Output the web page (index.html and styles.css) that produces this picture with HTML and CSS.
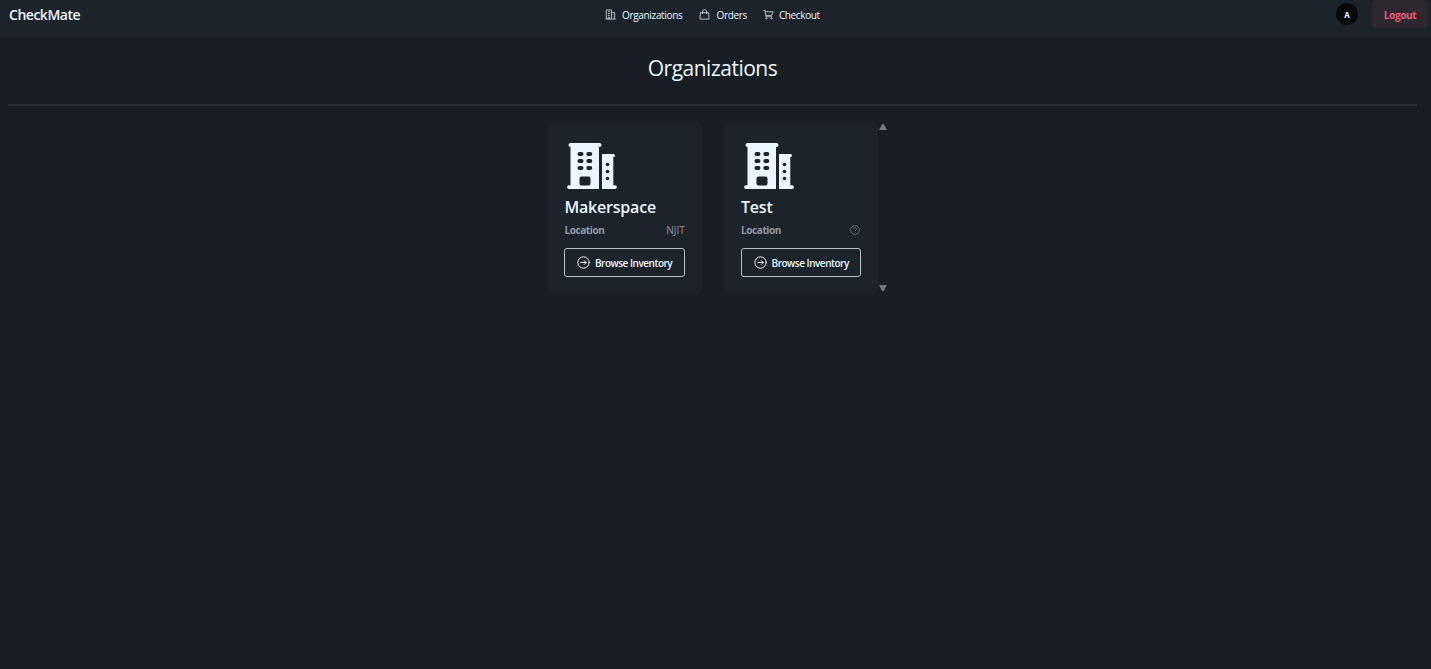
FILE: index.html
```html
<!DOCTYPE html>
<html lang="en">
<head>
    <meta charset="UTF-8">
    <meta name="viewport" content="width=device-width, initial-scale=1.0">
    <title>CheckMate</title>
    <link rel="stylesheet" href="styles.css">
</head>
<body>
    <svg class="sprite">
        <symbol id="building" viewBox="0 0 50 48">
            <path fill="currentColor" fill-rule="evenodd" d="M3.5 1h29a1.5 1.5 0 0 1 0 4H32v42H2a1.9 1.9 0 0 1 0-3.800h1.500V5a2 2 0 0 1 0-4zM12.500 10h2a1.800 1.800 0 0 1 0 4h-2a1.800 1.800 0 0 1 0-4zm8.800 0h2a1.800 1.800 0 0 1 0 4h-2a1.800 1.800 0 0 1 0-4zM12.500 17h2a1.800 1.800 0 0 1 0 4h-2a1.800 1.800 0 0 1 0-4zm8.800 0h2a1.800 1.800 0 0 1 0 4h-2a1.800 1.800 0 0 1 0-4zM12.500 24h2a1.800 1.800 0 0 1 0 4h-2a1.800 1.800 0 0 1 0-4zm8.800 0h2a1.800 1.800 0 0 1 0 4h-2a1.800 1.800 0 0 1 0-4zM14.500 34.500h7a2 2 0 0 1 2 2v5a2 2 0 0 1-2 2h-7a2 2 0 0 1-2-2v-5a2 2 0 0 1 2-2z"/>
            <path fill="currentColor" d="M35 12h11.500a1.500 1.500 0 0 1 0 3H46.300v28.200H48a1.900 1.900 0 0 1 0 3.800H35z"/>
            <g fill="#1d232a"><circle cx="40.500" cy="22.500" r="1.800"/><circle cx="40.500" cy="29.500" r="1.800"/><circle cx="40.500" cy="36.500" r="1.800"/></g>
        </symbol>
        <symbol id="arrow" viewBox="0 0 24 24">
            <g fill="none" stroke="currentColor" stroke-width="1.800" stroke-linecap="round" stroke-linejoin="round">
                <circle cx="12" cy="12" r="10.500"/><path d="M7 12h10M13.500 8.500L17 12l-3.500 3.500"/>
            </g>
        </symbol>
    </svg>

    <nav class="navbar">
        <a class="brand">CheckMate</a>
        <div class="links">
            <a class="link">
                <svg class="icon" viewBox="0 0 24 24"><path d="M1 22h22M3 22V2h11v20M14 8h7v14M6.500 6h4M6.500 10h4M6.500 14h4M7 22v-4h3v4M17.500 12v1M17.500 17v1"/></svg>
                Organizations
            </a>
            <a class="link">
                <svg class="icon" viewBox="0 0 24 24"><path d="M3 8h18l1 14H2zM7.500 11V6a4.500 4.500 0 0 1 9 0v5"/></svg>
                Orders
            </a>
            <a class="link">
                <svg class="icon" viewBox="0 0 24 24"><path d="M1 3h3.500l2 14H20M5 6h17l-3 8H6"/><circle cx="7.500" cy="20.500" r="1.500"/><circle cx="18.500" cy="20.500" r="1.500"/></svg>
                Checkout
            </a>
        </div>
        <div class="user">
            <div class="avatar">A</div>
            <button class="logout">Logout</button>
        </div>
    </nav>

    <main class="content">
        <h1>Organizations</h1>
        <hr>
        <div class="org-list">
            <div class="card">
                <svg class="card-icon"><use href="#building"/></svg>
                <h2>Makerspace</h2>
                <div class="row"><b>Location</b><span>NJIT</span></div>
                <button class="browse"><svg><use href="#arrow"/></svg>Browse Inventory</button>
            </div>
            <div class="card">
                <svg class="card-icon"><use href="#building"/></svg>
                <h2>Test</h2>
                <div class="row">
                    <b>Location</b>
                    <svg class="unknown" viewBox="0 0 24 24"><circle cx="12" cy="12" r="10.500"/><path d="M8.500 9.500a3.500 3.500 0 1 1 5 3.200c-1 .5-1.500 1-1.500 2M12 17v1"/></svg>
                </div>
                <button class="browse"><svg><use href="#arrow"/></svg>Browse Inventory</button>
            </div>
            <div class="scrollbar">
                <svg viewBox="0 0 8 6"><path d="M3.200 0h1.600L8 6H0z"/></svg>
                <svg viewBox="0 0 8 6"><path d="M3.200 6h1.600L8 0H0z"/></svg>
            </div>
        </div>
    </main>
</body>
</html>
```

FILE: styles.css
```css
* {
    box-sizing: border-box;
}
body {
    margin: 0;
    height: 100vh;
    overflow: hidden;
    background: #191e24;
    color: #ebf6ff;
    font-family: "Segoe UI", "Open Sans", "Noto Sans", sans-serif;
    font-size: 10px;
}
.sprite {
    display: none;
}
button {
    font-family: inherit;
    font-weight: 600;
    cursor: pointer;
}
.navbar {
    display: grid;
    grid-template-columns: 596px auto 1fr;
    height: 37px;
    padding: 0 3px 8px 9px;
    background: #1d232a;
}
.brand {
    align-self: center;
    font-size: 14px;
    font-weight: 600;
    letter-spacing: -0.48px;
}
.links {
    display: flex;
    align-items: center;
    gap: 17px;
}
.link {
    display: flex;
    align-items: center;
    gap: 6px;
    font-size: 10px;
    letter-spacing: -0.33px;
}
.link:last-child {
    gap: 5px;
    margin-left: -1px;
    letter-spacing: -0.38px;
}
.icon {
    width: 11px;
    height: 11px;
    fill: none;
    stroke: #c3cdd6;
    stroke-width: 2;
}
.user {
    display: flex;
    justify-content: flex-end;
    align-items: flex-start;
    gap: 14px;
}
.avatar {
    width: 22px;
    height: 22px;
    margin-top: 3px;
    border-radius: 50%;
    background: #09090b;
    font-size: 8px;
    font-weight: 700;
    line-height: 23px;
    text-align: center;
}
.logout {
    width: 56px;
    height: 28px;
    padding: 1px 0 0;
    border: none;
    border-radius: 4px;
    background: #2d282f;
    color: #ef5a78;
    font-size: 10px;
    font-weight: 700;
    letter-spacing: -0.35px;
}
.content {
    width: 1425px;
    padding: 0 8px;
}
h1 {
    margin: 0;
    padding-top: 15px;
    font-size: 21px;
    font-weight: 400;
    line-height: 32px;
    letter-spacing: -0.5px;
    text-align: center;
}
hr {
    height: 2px;
    margin: 19.5px 0 16.5px;
    border: none;
    background: #2a2f37;
}
.org-list {
    display: flex;
    margin-left: 539.6px;
}
.card {
    display: flex;
    flex-direction: column;
    width: 154px;
    height: 172px;
    margin-right: 22.6px;
    padding: 20px 16.8px 17px;
    border-radius: 7px;
    background: #1d232a;
}
.card:nth-child(2) {
    margin-right: 1px;
}
.card-icon {
    width: 50px;
    height: 48px;
    margin-left: 3px;
}
h2 {
    margin: 5px 0 0;
    font-size: 16px;
    font-weight: 600;
    line-height: 24px;
    letter-spacing: -0.2px;
}
.row {
    display: flex;
    justify-content: space-between;
    align-items: center;
    height: 16px;
    margin-top: 3px;
    color: #9299a8;
}
.row b {
    font-weight: 700;
    letter-spacing: -0.4px;
}
.unknown {
    width: 10px;
    height: 10px;
    margin-right: 1px;
    fill: none;
    stroke: #69717c;
    stroke-width: 2;
}
.browse {
    display: flex;
    align-items: center;
    justify-content: center;
    gap: 5px;
    height: 29px;
    margin-top: 10px;
    padding: 0;
    border: 1px solid #b9c3cc;
    border-radius: 3px;
    background: transparent;
    color: #ebf6ff;
    font-size: 10px;
    letter-spacing: -0.48px;
    white-space: nowrap;
}
.browse svg {
    width: 13px;
    height: 13px;
}
.scrollbar {
    display: flex;
    flex-direction: column;
    justify-content: space-between;
    padding: 2px 0 3px;
}
.scrollbar svg {
    width: 8px;
    height: 6px;
    fill: #74767a;
}
```
